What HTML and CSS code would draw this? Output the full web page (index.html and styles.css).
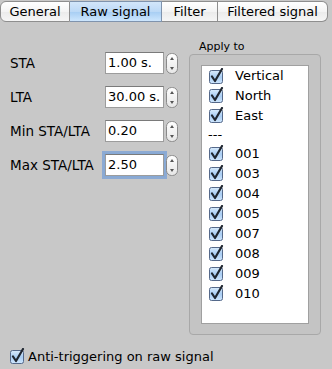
FILE: index.html
```html
<!DOCTYPE html>
<html lang="en">
<head>
  <meta charset="UTF-8" />
  <title>Raw signal</title>
  <link rel="stylesheet" href="styles.css">
</head>
<body>
  <svg class="defs" width="0" height="0">
    <defs>
      <linearGradient id="cbfill" x1="0" y1="0" x2="0" y2="1">
        <stop offset="0" stop-color="#d9ebfc" />
        <stop offset="0.5" stop-color="#a9cdf3" />
        <stop offset="1" stop-color="#cfe6fd" />
      </linearGradient>
      <symbol id="cb" viewBox="0 0 16 16">
        <rect x="1.5" y="2.5" width="13" height="13" rx="2" fill="url(#cbfill)" stroke="#55698a" />
        <path d="M4 8.5 L7 13 L14 1" fill="none" stroke="#1f2630" stroke-width="2.2" stroke-linejoin="round" stroke-linecap="round" />
      </symbol>
      <linearGradient id="spfill" x1="0" y1="0" x2="0" y2="1">
        <stop offset="0" stop-color="#ffffff" />
        <stop offset="1" stop-color="#e6e6e6" />
      </linearGradient>
      <symbol id="spin" viewBox="0 0 12 21">
        <rect x="0.5" y="0.5" width="11" height="20" rx="5" fill="url(#spfill)" stroke="#8a8a8a" />
        <path d="M4 7 L6 4 L8 7 Z" fill="#555" />
        <path d="M4 14 L6 17 L8 14 Z" fill="#555" />
      </symbol>
    </defs>
  </svg>

  <ul class="tabs">
    <li class="tab tab-first">General</li>
    <li class="tab active">Raw signal</li>
    <li class="tab">Filter</li>
    <li class="tab tab-last">Filtered signal</li>
  </ul>

  <div class="pane">
    <div class="form">
      <div class="row">
        <label>STA</label>
        <div class="field"><span class="input">1.00 s.</span></div>
        <svg class="spin"><use href="#spin" /></svg>
      </div>
      <div class="row">
        <label>LTA</label>
        <div class="field"><span class="input">30.00 s.</span></div>
        <svg class="spin"><use href="#spin" /></svg>
      </div>
      <div class="row">
        <label>Min STA/LTA</label>
        <div class="field"><span class="input">0.20</span></div>
        <svg class="spin"><use href="#spin" /></svg>
      </div>
      <div class="row">
        <label>Max STA/LTA</label>
        <div class="field focus"><span class="input">2.50</span></div>
        <svg class="spin"><use href="#spin" /></svg>
      </div>
    </div>

    <div class="group">
      <div class="group-title">Apply to</div>
      <div class="group-box">
        <ul class="list">
          <li><svg class="cb"><use href="#cb" /></svg>Vertical</li>
          <li><svg class="cb"><use href="#cb" /></svg>North</li>
          <li><svg class="cb"><use href="#cb" /></svg>East</li>
          <li class="sep">---</li>
          <li><svg class="cb"><use href="#cb" /></svg>001</li>
          <li><svg class="cb"><use href="#cb" /></svg>003</li>
          <li><svg class="cb"><use href="#cb" /></svg>004</li>
          <li><svg class="cb"><use href="#cb" /></svg>005</li>
          <li><svg class="cb"><use href="#cb" /></svg>007</li>
          <li><svg class="cb"><use href="#cb" /></svg>008</li>
          <li><svg class="cb"><use href="#cb" /></svg>009</li>
          <li><svg class="cb"><use href="#cb" /></svg>010</li>
        </ul>
      </div>
    </div>
  </div>

  <div class="bottom">
    <svg class="cb"><use href="#cb" /></svg>Anti-triggering on raw signal
  </div>
</body>
</html>
```

FILE: styles.css
```css
* {
  box-sizing: border-box;
}

body {
  margin: 0;
  width: 332px;
  height: 369px;
  background: #c8c8c8;
  font-family: "DejaVu Sans", "Noto Sans", sans-serif;
  font-size: 13px;
  color: #000;
  overflow: hidden;
}

.defs {
  position: absolute;
}

/* tab bar */
.tabs {
  margin: 1px 4px 0 0;
  padding: 0;
  list-style: none;
  display: flex;
  height: 21px;
}

.tab {
  height: 21px;
  line-height: 19px;
  text-align: center;
  font-size: 13px;
  border: 1px solid #8e8e8e;
  border-left: none;
  background: linear-gradient(#ffffff, #f4f4f4 50%, #ebebeb 51%, #f6f6f6);
}

.tab:nth-child(1) { width: 70px; }
.tab:nth-child(2) { width: 92px; }
.tab:nth-child(3) { width: 56px; }
.tab:nth-child(4) { width: 110px; }

.tab-first {
  border-left: 1px solid #8e8e8e;
  border-radius: 6px 0 0 6px;
}

.tab-last {
  border-radius: 0 6px 6px 0;
}

.tab.active {
  background: linear-gradient(#d3e6fa, #bcd9f6 50%, #a6cdf3 51%, #cde6fd);
  border-color: #7f93ad;
}

/* panel */
.pane {
  display: flex;
  align-items: flex-start;
}

.form {
  padding: 30px 0 0 10px;
  width: 189px;
}

.row {
  display: flex;
  align-items: center;
  height: 22px;
  margin-bottom: 12px;
}

.row label {
  width: 95px;
  font-size: 13.5px;
  white-space: nowrap;
}

.field {
  width: 59px;
  height: 22px;
  background: #fff;
  border: 1px solid #9c9c9c;
  border-top-color: #7a7a7a;
  padding: 0 0 0 2px;
  line-height: 20px;
  font-size: 13px;
  white-space: nowrap;
  overflow: hidden;
}

.field.focus {
  box-shadow: 0 0 0 1px #86a9d6, 0 0 0 3px rgba(120, 160, 215, 0.75);
}

.spin {
  width: 12px;
  height: 21px;
  margin-left: 2px;
}

/* Apply to group */
.group {
  padding-top: 19px;
}

.group-title {
  font-size: 11px;
  padding-left: 10px;
  height: 13px;
  line-height: 12px;
}

.group-box {
  width: 132px;
  height: 281px;
  background: #c4c4c4;
  border: 1px solid #a8a8a8;
  border-radius: 4px;
  padding: 10px 11px 10px 11px;
}

.list {
  margin: 0;
  padding: 0 0 0 6px;
  list-style: none;
  height: 259px;
  background: #fff;
  border: 1px solid #a0a0a0;
}

.list li {
  display: flex;
  align-items: center;
  height: 20px;
  font-size: 13px;
}

.list li:first-child {
  height: 19px;
}

.list li.sep {
  height: 18px;
}

.cb {
  width: 16px;
  height: 16px;
  margin-right: 11px;
  flex: none;
}

/* bottom option */
.bottom {
  display: flex;
  align-items: center;
  margin-top: 13px;
  padding-left: 9px;
  font-size: 13px;
}

.bottom .cb {
  margin-right: 3px;
}
```
